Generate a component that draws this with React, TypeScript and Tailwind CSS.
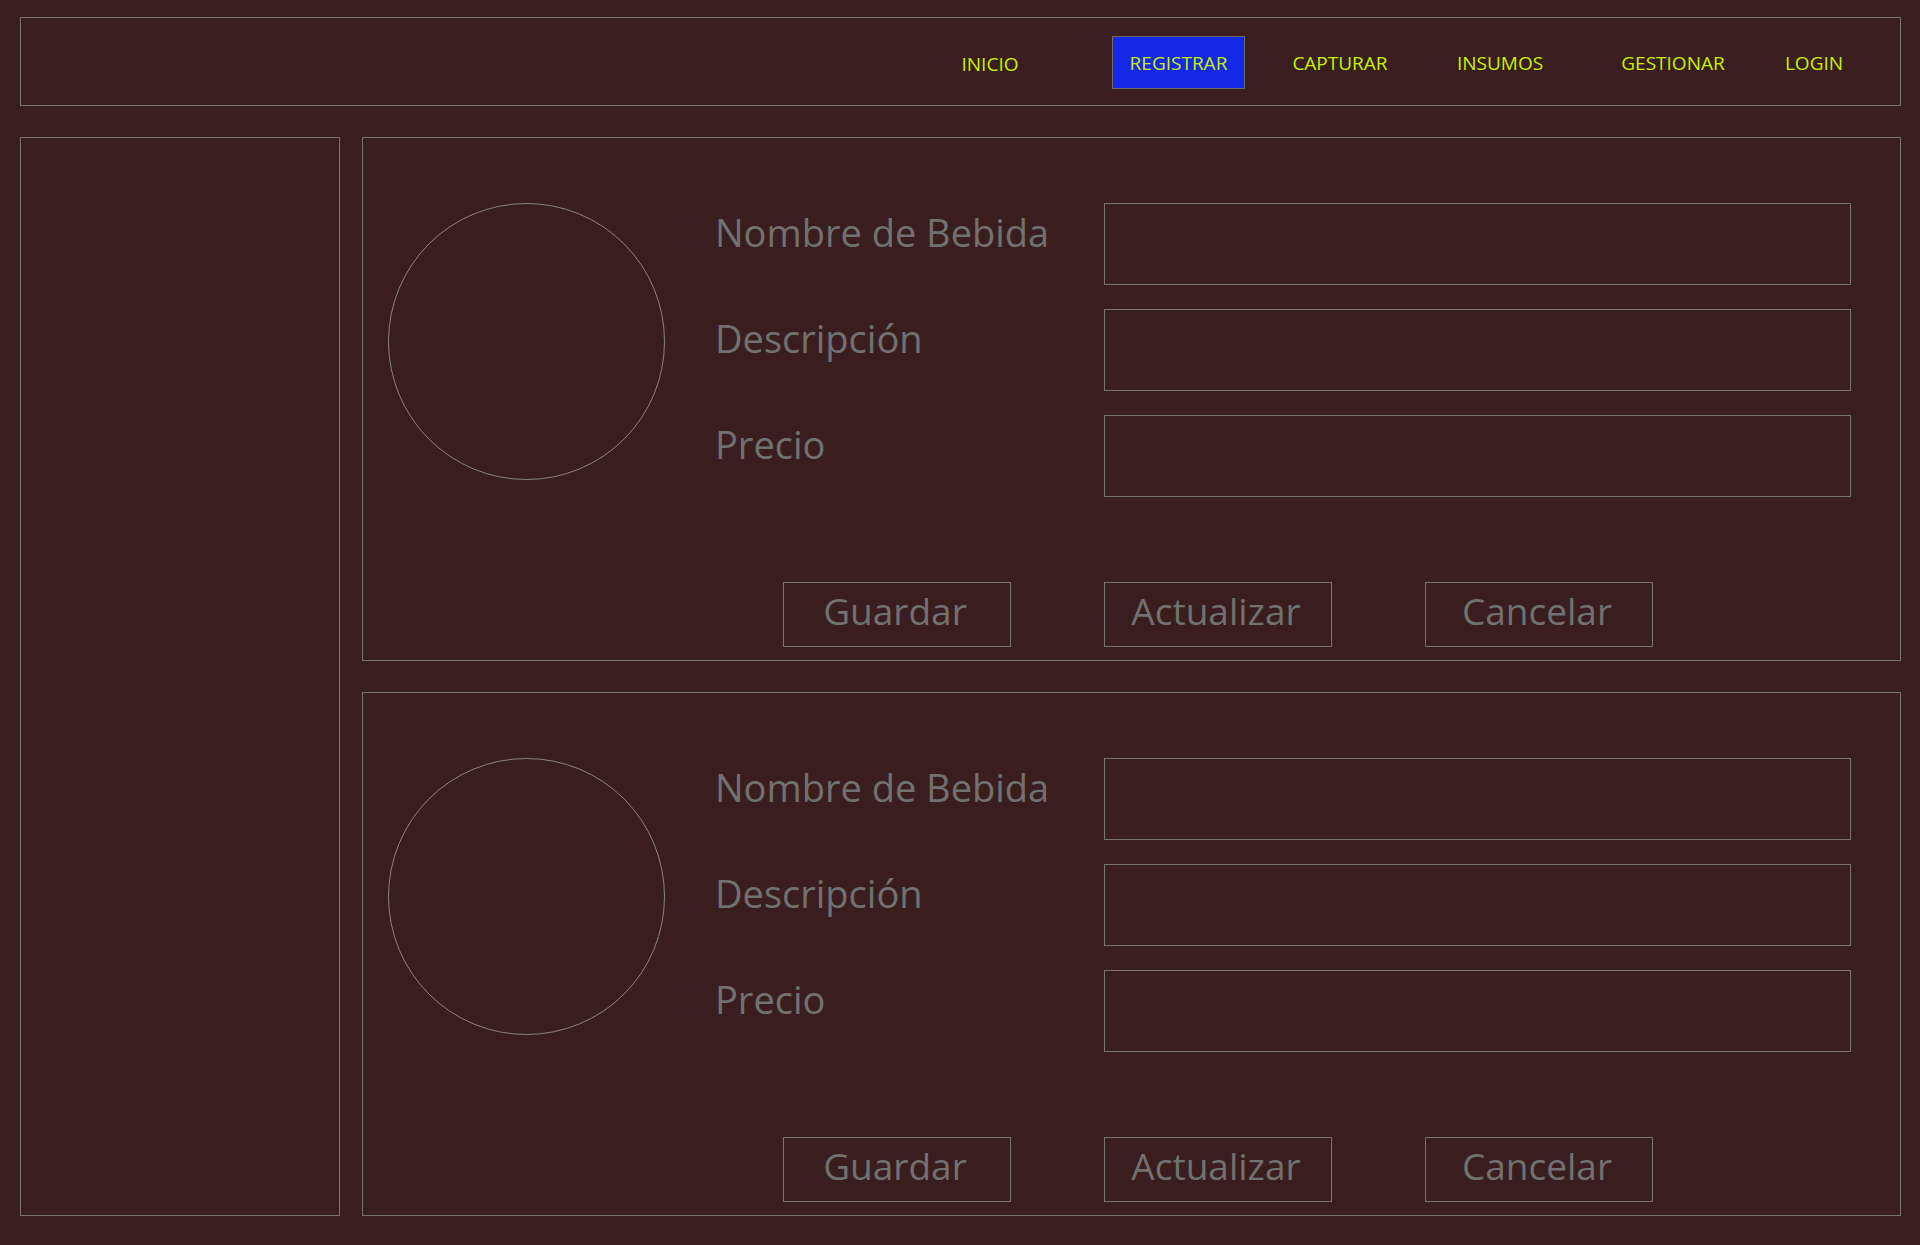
const navItems = [
  { label: "INICIO", className: "ml-0 w-[100px] pt-[4px]" },
  { label: "REGISTRAR", className: "ml-[72px] w-[133px] h-[53px] pt-[2px] bg-[#1428e6] border border-[#6f6a6a]" },
  { label: "CAPTURAR", className: "ml-[40px] w-[110px] pt-[2px]" },
  { label: "INSUMOS", className: "ml-[55px] w-[100px] pt-[2px]" },
  { label: "GESTIONAR", className: "ml-[63px] w-[120px] pt-[2px]" },
  { label: "LOGIN", className: "ml-[46px] w-[70px] pt-[2px]" },
];

const fields = ["Nombre de Bebida", "Descripción", "Precio"];
const actions = ["Guardar", "Actualizar", "Cancelar"];

const DrinkCard = () => {
  return (
    <div className="h-[524px] border border-[#7a7272] flex flex-col">
      <div className="flex pt-[65px] pl-[25px]">
        <div className="w-[277px] h-[277px] rounded-full border border-[#8a8282] shrink-0" />
        <div className="ml-[50px] grid grid-cols-[389px_747px] gap-y-[24px]">
          {fields.map((field) => (
            <div key={field} className="contents">
              <div className="h-[82px] pt-[10px] text-[38px] leading-[38px] text-[#727070]">
                {field}
              </div>
              <div className="h-[82px] border border-[#7a7272]" />
            </div>
          ))}
        </div>
      </div>
      <div className="mt-auto mb-[13px] ml-[420px] flex gap-[93px]">
        {actions.map((action) => (
          <button
            key={action}
            className="w-[228px] h-[65px] border border-[#7a7272] text-[37px] leading-none text-[#727070] flex items-center justify-center pb-[8px] pr-[4px]"
          >
            {action}
          </button>
        ))}
      </div>
    </div>
  );
};

const App = () => {
  return (
    <div
      className="min-h-screen bg-[#3a1e1f] pl-[20px] pr-[19px] pt-[17px] pb-[29px]"
      style={{ fontFamily: '"Open Sans", "Noto Sans", sans-serif' }}
    >
      <nav className="h-[89px] border border-[#7a7272] flex items-center justify-end pr-[51px] pt-[2px]">
        {navItems.map((item) => (
          <a
            key={item.label}
            href="#"
            className={`${item.className} flex items-center justify-center text-[19px] text-[#c8f000]`}
          >
            {item.label}
          </a>
        ))}
      </nav>
      <div className="mt-[31px] flex gap-[22px]">
        <aside className="w-[320px] h-[1079px] border border-[#7a7272] shrink-0" />
        <main className="flex-1 flex flex-col gap-[31px]">
          <DrinkCard />
          <DrinkCard />
        </main>
      </div>
    </div>
  );
};

export default App;
